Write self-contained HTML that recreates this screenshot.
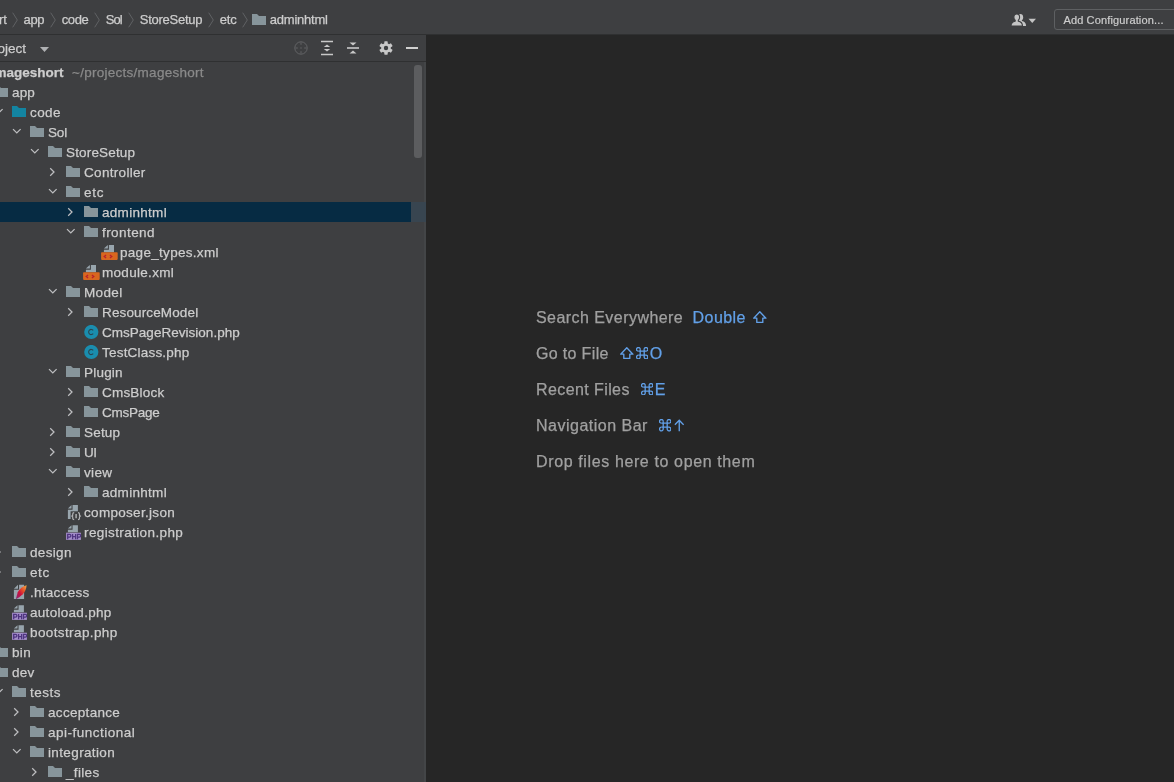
<!DOCTYPE html>
<html><head><meta charset="utf-8"><style>
html,body{margin:0;padding:0}
body{width:1174px;height:782px;overflow:hidden;position:relative;background:#3E3F41;font-family:"Liberation Sans",sans-serif;color:#CDCDCD}
.ab,.t,.ic,.ch{position:absolute}
.t{font-size:13.5px;line-height:20px;white-space:nowrap;top:1px;-webkit-text-stroke:0.25px currentColor}
#top{will-change:transform;position:absolute;left:0;top:0;width:1174px;height:34px;background:#3E3F41;border-bottom:1px solid #2F3031}
#panel{will-change:transform;position:absolute;left:0;top:35px;width:426px;height:747px;background:#3E3F41;overflow:hidden}
#hdr{position:absolute;left:0;top:0;width:426px;height:26px;border-bottom:1px solid #2F3031}
#tree{position:absolute;left:0;top:-35px;width:426px;height:782px}
.r{position:absolute;left:0;width:411px;height:20px}
.r.sel{background:#062B43}
.b{font-weight:bold}
.dim{color:#8A8A8A}
#editor{will-change:transform;position:absolute;left:426px;top:35px;width:748px;height:747px;background:#262626}
.et{position:absolute;font-size:16px;line-height:20px;white-space:nowrap;color:#A0A0A0;-webkit-text-stroke:0.25px currentColor}
.bl{color:#62A0E8}
#thumb{position:absolute;left:414px;top:30px;width:8px;height:93px;border-radius:3px;background:#5C5D5F}
#btn{position:absolute;left:1054px;top:9px;width:130px;height:21px;border:1px solid #5E6062;border-radius:3px;box-sizing:border-box}
</style></head><body>
<div id="top">
<span class="t" style="left:-54.5px;top:10px;font-size:13px">mageshort</span><span class="t" style="left:23.5px;top:10px;font-size:13px;letter-spacing:-0.302px">app</span><span class="t" style="left:61.8px;top:10px;font-size:13px;letter-spacing:-0.434px">code</span><span class="t" style="left:105.7px;top:10px;font-size:13px;letter-spacing:-0.898px">Sol</span><span class="t" style="left:139.8px;top:10px;font-size:13px;letter-spacing:-0.262px">StoreSetup</span><span class="t" style="left:219.7px;top:10px;font-size:13px;letter-spacing:-0.172px">etc</span><span class="t" style="left:269.8px;top:10px;font-size:13px;letter-spacing:-0.236px">adminhtml</span><svg class="ab" width="7" height="16" viewBox="0 0 7 16" style="left:11.8px;top:12px"><path d="M0.7 0.7L5.3 8L0.7 15.3" stroke="#606264" stroke-width="1" fill="none"/></svg><svg class="ab" width="7" height="16" viewBox="0 0 7 16" style="left:49.5px;top:12px"><path d="M0.7 0.7L5.3 8L0.7 15.3" stroke="#606264" stroke-width="1" fill="none"/></svg><svg class="ab" width="7" height="16" viewBox="0 0 7 16" style="left:93.5px;top:12px"><path d="M0.7 0.7L5.3 8L0.7 15.3" stroke="#606264" stroke-width="1" fill="none"/></svg><svg class="ab" width="7" height="16" viewBox="0 0 7 16" style="left:127.5px;top:12px"><path d="M0.7 0.7L5.3 8L0.7 15.3" stroke="#606264" stroke-width="1" fill="none"/></svg><svg class="ab" width="7" height="16" viewBox="0 0 7 16" style="left:207.8px;top:12px"><path d="M0.7 0.7L5.3 8L0.7 15.3" stroke="#606264" stroke-width="1" fill="none"/></svg><svg class="ab" width="7" height="16" viewBox="0 0 7 16" style="left:241.8px;top:12px"><path d="M0.7 0.7L5.3 8L0.7 15.3" stroke="#606264" stroke-width="1" fill="none"/></svg><svg class="ab" width="14" height="11" viewBox="0 0 14 11" style="left:252px;top:14px"><path d="M0 0H5L7 2H14V11H0Z" fill="#87959B"/></svg>
<svg class="ab" width="27" height="14" viewBox="0 0 27 14" style="left:1010px;top:13px"><path transform="translate(3.6 0)" d="M1 13C1 10.2 2.8 8.6 5.2 8.1L5.2 7.3C4.3 6.6 3.9 5.5 3.9 4.2C3.9 2 5.1 0.9 6.75 0.9C8.4 0.9 9.6 2 9.6 4.2C9.6 5.5 9.2 6.6 8.3 7.3L8.3 8.1C10.7 8.6 12.5 10.2 12.5 13Z" fill="#C4C4C4"/><path d="M1 13C1 10.2 2.8 8.6 5.2 8.1L5.2 7.3C4.3 6.6 3.9 5.5 3.9 4.2C3.9 2 5.1 0.9 6.75 0.9C8.4 0.9 9.6 2 9.6 4.2C9.6 5.5 9.2 6.6 8.3 7.3L8.3 8.1C10.7 8.6 12.5 10.2 12.5 13Z" fill="#C4C4C4" stroke="#3E3F41" stroke-width="1.1"/><path d="M18.5 5.8H26L22.25 9.9Z" fill="#C4C4C4"/></svg>
<div id="btn"></div>
<span class="t" style="left:1063.4px;top:10px;font-size:11px;letter-spacing:0.15px;-webkit-text-stroke:0.2px currentColor">Add Configuration...</span>
</div>
<div id="panel">
<div id="hdr">
<span class="t" style="left:-16px;top:4px">Project</span>
<svg class="ab" width="9" height="6" viewBox="0 0 9 6" style="left:39.5px;top:11.5px"><path d="M0 0H9L4.5 5Z" fill="#AFB1B3"/></svg>
<svg class="ab" width="16" height="16" viewBox="0 0 16 16" style="left:293px;top:5px"><circle cx="8" cy="8" r="6.2" stroke="#66686A" stroke-width="0.9" fill="none"/><path d="M8 2.5V4.8M8 11.2V13.5M2.5 8H4.8M11.2 8H13.5" stroke="#66686A" stroke-width="0.9"/><circle cx="8" cy="8" r="0.7" fill="#66686A"/></svg>
<svg class="ab" width="14" height="16" viewBox="0 0 14 16" style="left:320px;top:5px"><path d="M1 1.5H13M1 14.5H13" stroke="#C8C8C8" stroke-width="1.6"/><path d="M3.8 7.1L7 4.4L10.2 7.1ZM3.8 8.9L7 11.6L10.2 8.9Z" fill="#C8C8C8"/></svg>
<svg class="ab" width="14" height="16" viewBox="0 0 14 16" style="left:346px;top:5px"><path d="M1 8H13" stroke="#C8C8C8" stroke-width="1.6"/><path d="M3.5 2.5L7 5.5L10.5 2.5ZM3.5 13.5L7 10.5L10.5 13.5Z" fill="#C8C8C8"/></svg>
<svg class="ab" width="14" height="14" viewBox="0 0 14 14" style="left:379px;top:6px"><g fill="#C8C8C8"><circle cx="7" cy="7" r="4.8"/><rect x="5.3" y="0.3" width="3.4" height="13.4" rx="0.6"/><rect x="5.3" y="0.3" width="3.4" height="13.4" rx="0.6" transform="rotate(60 7 7)"/><rect x="5.3" y="0.3" width="3.4" height="13.4" rx="0.6" transform="rotate(120 7 7)"/></g><circle cx="7" cy="7" r="2.2" fill="#3C3F41"/></svg>
<div class="ab" style="left:406px;top:12px;width:12px;height:2px;background:#D0D0D0"></div>
</div>
<div id="tree">
<div class="r" style="top:62px"><span class="t b" style="left:-5.6px">mageshort</span><span class="t dim" style="left:72px;letter-spacing:0.268px">~/projects/mageshort</span></div><div class="r" style="top:82px"><svg class="ch" width="7" height="10" viewBox="0 0 7 10" style="left:-23.5px;top:5px"><path d="M1.2 1.2L5 5L1.2 8.8" stroke="#BDBEC0" stroke-width="1.25" fill="none"/></svg><svg class="ic" width="14" height="11" viewBox="0 0 14 11" style="left:-6px;top:4px"><path d="M0 0H5L7 2H14V11H0Z" fill="#87959B"/></svg><span class="t" style="left:12px;letter-spacing:0.177px">app</span></div><div class="r" style="top:102px"><svg class="ch" width="10" height="7" viewBox="0 0 10 7" style="left:-6.399999999999999px;top:6px"><path d="M1 1.1L4.8 4.9L8.6 1.1" stroke="#BDBEC0" stroke-width="1.25" fill="none"/></svg><svg class="ic" width="14" height="11" viewBox="0 0 14 11" style="left:12px;top:4px"><path d="M0 0H5L7 2H14V11H0Z" fill="#1384A1"/></svg><span class="t" style="left:30px;letter-spacing:0.401px">code</span></div><div class="r" style="top:122px"><svg class="ch" width="10" height="7" viewBox="0 0 10 7" style="left:11.600000000000001px;top:6px"><path d="M1 1.1L4.8 4.9L8.6 1.1" stroke="#BDBEC0" stroke-width="1.25" fill="none"/></svg><svg class="ic" width="14" height="11" viewBox="0 0 14 11" style="left:30px;top:4px"><path d="M0 0H5L7 2H14V11H0Z" fill="#87959B"/></svg><span class="t" style="left:48px;letter-spacing:-0.158px">Sol</span></div><div class="r" style="top:142px"><svg class="ch" width="10" height="7" viewBox="0 0 10 7" style="left:29.6px;top:6px"><path d="M1 1.1L4.8 4.9L8.6 1.1" stroke="#BDBEC0" stroke-width="1.25" fill="none"/></svg><svg class="ic" width="14" height="11" viewBox="0 0 14 11" style="left:48px;top:4px"><path d="M0 0H5L7 2H14V11H0Z" fill="#87959B"/></svg><span class="t" style="left:66px;letter-spacing:0.158px">StoreSetup</span></div><div class="r" style="top:162px"><svg class="ch" width="7" height="10" viewBox="0 0 7 10" style="left:48.5px;top:5px"><path d="M1.2 1.2L5 5L1.2 8.8" stroke="#BDBEC0" stroke-width="1.25" fill="none"/></svg><svg class="ic" width="14" height="11" viewBox="0 0 14 11" style="left:66px;top:4px"><path d="M0 0H5L7 2H14V11H0Z" fill="#87959B"/></svg><span class="t" style="left:84px;letter-spacing:0.315px">Controller</span></div><div class="r" style="top:182px"><svg class="ch" width="10" height="7" viewBox="0 0 10 7" style="left:47.6px;top:6px"><path d="M1 1.1L4.8 4.9L8.6 1.1" stroke="#BDBEC0" stroke-width="1.25" fill="none"/></svg><svg class="ic" width="14" height="11" viewBox="0 0 14 11" style="left:66px;top:4px"><path d="M0 0H5L7 2H14V11H0Z" fill="#87959B"/></svg><span class="t" style="left:84px;letter-spacing:0.742px">etc</span></div><div class="r sel" style="top:202px"><svg class="ch" width="7" height="10" viewBox="0 0 7 10" style="left:66.5px;top:5px"><path d="M1.2 1.2L5 5L1.2 8.8" stroke="#BDBEC0" stroke-width="1.25" fill="none"/></svg><svg class="ic" width="14" height="11" viewBox="0 0 14 11" style="left:84px;top:4px"><path d="M0 0H5L7 2H14V11H0Z" fill="#87959B"/></svg><span class="t" style="left:102px;letter-spacing:0.298px">adminhtml</span></div><div class="r" style="top:222px"><svg class="ch" width="10" height="7" viewBox="0 0 10 7" style="left:65.6px;top:6px"><path d="M1 1.1L4.8 4.9L8.6 1.1" stroke="#BDBEC0" stroke-width="1.25" fill="none"/></svg><svg class="ic" width="14" height="11" viewBox="0 0 14 11" style="left:84px;top:4px"><path d="M0 0H5L7 2H14V11H0Z" fill="#87959B"/></svg><span class="t" style="left:102px;letter-spacing:0.432px">frontend</span></div><div class="r" style="top:242px"><svg class="ic" width="17" height="16" viewBox="0 0 17 16" style="left:101px;top:2px"><path d="M2.9 4.6L6.85 0.9V4.6Z" fill="#98A5AD"/><path d="M7.8999999999999995 0.9H13V8.2H2.9V5.6499999999999995H7.8999999999999995Z" fill="#98A5AD"/><path d="M0.8 8.2H15.9Q16.7 8.2 16.7 9V15.1Q16.7 15.9 15.9 15.9H0.8Q0.1 15.9 0.1 15.1V9Q0.1 8.2 0.8 8.2Z" fill="#D9661F"/><path d="M5.1 10.9L3.2 12.4L5.1 13.9M8.9 10.9L10.8 12.4L8.9 13.9" stroke="#B8202C" stroke-width="1.25" fill="none"/></svg><span class="t" style="left:120px;letter-spacing:0.299px">page_types.xml</span></div><div class="r" style="top:262px"><svg class="ic" width="17" height="16" viewBox="0 0 17 16" style="left:83px;top:2px"><path d="M2.9 4.6L6.85 0.9V4.6Z" fill="#98A5AD"/><path d="M7.8999999999999995 0.9H13V8.2H2.9V5.6499999999999995H7.8999999999999995Z" fill="#98A5AD"/><path d="M0.8 8.2H15.9Q16.7 8.2 16.7 9V15.1Q16.7 15.9 15.9 15.9H0.8Q0.1 15.9 0.1 15.1V9Q0.1 8.2 0.8 8.2Z" fill="#D9661F"/><path d="M5.1 10.9L3.2 12.4L5.1 13.9M8.9 10.9L10.8 12.4L8.9 13.9" stroke="#B8202C" stroke-width="1.25" fill="none"/></svg><span class="t" style="left:102px;letter-spacing:0.304px">module.xml</span></div><div class="r" style="top:282px"><svg class="ch" width="10" height="7" viewBox="0 0 10 7" style="left:47.6px;top:6px"><path d="M1 1.1L4.8 4.9L8.6 1.1" stroke="#BDBEC0" stroke-width="1.25" fill="none"/></svg><svg class="ic" width="14" height="11" viewBox="0 0 14 11" style="left:66px;top:4px"><path d="M0 0H5L7 2H14V11H0Z" fill="#87959B"/></svg><span class="t" style="left:84px;letter-spacing:0.351px">Model</span></div><div class="r" style="top:302px"><svg class="ch" width="7" height="10" viewBox="0 0 7 10" style="left:66.5px;top:5px"><path d="M1.2 1.2L5 5L1.2 8.8" stroke="#BDBEC0" stroke-width="1.25" fill="none"/></svg><svg class="ic" width="14" height="11" viewBox="0 0 14 11" style="left:84px;top:4px"><path d="M0 0H5L7 2H14V11H0Z" fill="#87959B"/></svg><span class="t" style="left:102px;letter-spacing:0.133px">ResourceModel</span></div><div class="r" style="top:322px"><svg class="ic" width="16" height="16" viewBox="0 0 16 16" style="left:83.5px;top:3px"><circle cx="7.3" cy="7" r="7.1" fill="#1A8DAE"/><path d="M9.2 5.3A2.6 2.6 0 1 0 9.2 8.7" stroke="#2A4550" stroke-width="1.05" fill="none"/></svg><span class="t" style="left:102px;letter-spacing:0.023px">CmsPageRevision.php</span></div><div class="r" style="top:342px"><svg class="ic" width="16" height="16" viewBox="0 0 16 16" style="left:83.5px;top:3px"><circle cx="7.3" cy="7" r="7.1" fill="#1A8DAE"/><path d="M9.2 5.3A2.6 2.6 0 1 0 9.2 8.7" stroke="#2A4550" stroke-width="1.05" fill="none"/></svg><span class="t" style="left:102px;letter-spacing:0.206px">TestClass.php</span></div><div class="r" style="top:362px"><svg class="ch" width="10" height="7" viewBox="0 0 10 7" style="left:47.6px;top:6px"><path d="M1 1.1L4.8 4.9L8.6 1.1" stroke="#BDBEC0" stroke-width="1.25" fill="none"/></svg><svg class="ic" width="14" height="11" viewBox="0 0 14 11" style="left:66px;top:4px"><path d="M0 0H5L7 2H14V11H0Z" fill="#87959B"/></svg><span class="t" style="left:84px;letter-spacing:0.211px">Plugin</span></div><div class="r" style="top:382px"><svg class="ch" width="7" height="10" viewBox="0 0 7 10" style="left:66.5px;top:5px"><path d="M1.2 1.2L5 5L1.2 8.8" stroke="#BDBEC0" stroke-width="1.25" fill="none"/></svg><svg class="ic" width="14" height="11" viewBox="0 0 14 11" style="left:84px;top:4px"><path d="M0 0H5L7 2H14V11H0Z" fill="#87959B"/></svg><span class="t" style="left:102px;letter-spacing:0.205px">CmsBlock</span></div><div class="r" style="top:402px"><svg class="ch" width="7" height="10" viewBox="0 0 7 10" style="left:66.5px;top:5px"><path d="M1.2 1.2L5 5L1.2 8.8" stroke="#BDBEC0" stroke-width="1.25" fill="none"/></svg><svg class="ic" width="14" height="11" viewBox="0 0 14 11" style="left:84px;top:4px"><path d="M0 0H5L7 2H14V11H0Z" fill="#87959B"/></svg><span class="t" style="left:102px;letter-spacing:-0.233px">CmsPage</span></div><div class="r" style="top:422px"><svg class="ch" width="7" height="10" viewBox="0 0 7 10" style="left:48.5px;top:5px"><path d="M1.2 1.2L5 5L1.2 8.8" stroke="#BDBEC0" stroke-width="1.25" fill="none"/></svg><svg class="ic" width="14" height="11" viewBox="0 0 14 11" style="left:66px;top:4px"><path d="M0 0H5L7 2H14V11H0Z" fill="#87959B"/></svg><span class="t" style="left:84px;letter-spacing:0.201px">Setup</span></div><div class="r" style="top:442px"><svg class="ch" width="7" height="10" viewBox="0 0 7 10" style="left:48.5px;top:5px"><path d="M1.2 1.2L5 5L1.2 8.8" stroke="#BDBEC0" stroke-width="1.25" fill="none"/></svg><svg class="ic" width="14" height="11" viewBox="0 0 14 11" style="left:66px;top:4px"><path d="M0 0H5L7 2H14V11H0Z" fill="#87959B"/></svg><span class="t" style="left:84px;letter-spacing:-0.400px">UI</span></div><div class="r" style="top:462px"><svg class="ch" width="10" height="7" viewBox="0 0 10 7" style="left:47.6px;top:6px"><path d="M1 1.1L4.8 4.9L8.6 1.1" stroke="#BDBEC0" stroke-width="1.25" fill="none"/></svg><svg class="ic" width="14" height="11" viewBox="0 0 14 11" style="left:66px;top:4px"><path d="M0 0H5L7 2H14V11H0Z" fill="#87959B"/></svg><span class="t" style="left:84px;letter-spacing:0.328px">view</span></div><div class="r" style="top:482px"><svg class="ch" width="7" height="10" viewBox="0 0 7 10" style="left:66.5px;top:5px"><path d="M1.2 1.2L5 5L1.2 8.8" stroke="#BDBEC0" stroke-width="1.25" fill="none"/></svg><svg class="ic" width="14" height="11" viewBox="0 0 14 11" style="left:84px;top:4px"><path d="M0 0H5L7 2H14V11H0Z" fill="#87959B"/></svg><span class="t" style="left:102px;letter-spacing:0.298px">adminhtml</span></div><div class="r" style="top:502px"><svg class="ic" width="16" height="16" viewBox="0 0 16 16" style="left:66px;top:3px"><path d="M1.9 3.6L5.5 0.1V3.6Z" fill="#98A5AD"/><path d="M6.55 0.1H11.9V14H1.9V4.65H6.55Z" fill="#98A5AD"/><path d="M4.6 6.3H15.8V15.6H4.6Z" fill="#3E3F41"/><path d="M8.2 7.6Q6.7 7.6 6.7 9V10.4L5.8 11.1L6.7 11.8V13.2Q6.7 14.6 8.2 14.6M12 7.6Q13.5 7.6 13.5 9V10.4L14.4 11.1L13.5 11.8V13.2Q13.5 14.6 12 14.6" stroke="#B4B6B8" stroke-width="1.15" fill="none"/><path d="M10.1 9V13.2" stroke="#B4B6B8" stroke-width="1.4"/></svg><span class="t" style="left:84px;letter-spacing:0.309px">composer.json</span></div><div class="r" style="top:522px"><svg class="ic" width="16" height="16" viewBox="0 0 16 16" style="left:66px;top:3px"><path d="M1.9 3.6L5.5 0.3V3.6Z" fill="#98A5AD"/><path d="M6.55 0.3H11.9V7.2H1.9V4.65H6.55Z" fill="#98A5AD"/><path d="M0.1 7.7H14.9V14.9H0.1Z" fill="#A48ECA"/><path d="M1.7 14.3V9.3H3.5Q4.9 9.3 4.9 10.75Q4.9 12.2 3.5 12.2H1.7M6.6 9.1V14.3M9.6 9.1V14.3M6.6 11.7H9.6M11.5 14.3V9.3H13.3Q14.7 9.3 14.7 10.75Q14.7 12.2 13.3 12.2H11.5" stroke="#4F3580" stroke-width="1.3" fill="none"/></svg><span class="t" style="left:84px;letter-spacing:0.385px">registration.php</span></div><div class="r" style="top:542px"><svg class="ch" width="7" height="10" viewBox="0 0 7 10" style="left:-5.5px;top:5px"><path d="M1.2 1.2L5 5L1.2 8.8" stroke="#BDBEC0" stroke-width="1.25" fill="none"/></svg><svg class="ic" width="14" height="11" viewBox="0 0 14 11" style="left:12px;top:4px"><path d="M0 0H5L7 2H14V11H0Z" fill="#87959B"/></svg><span class="t" style="left:30px;letter-spacing:0.338px">design</span></div><div class="r" style="top:562px"><svg class="ch" width="7" height="10" viewBox="0 0 7 10" style="left:-5.5px;top:5px"><path d="M1.2 1.2L5 5L1.2 8.8" stroke="#BDBEC0" stroke-width="1.25" fill="none"/></svg><svg class="ic" width="14" height="11" viewBox="0 0 14 11" style="left:12px;top:4px"><path d="M0 0H5L7 2H14V11H0Z" fill="#87959B"/></svg><span class="t" style="left:30px;letter-spacing:0.592px">etc</span></div><div class="r" style="top:582px"><svg class="ic" width="16" height="16" viewBox="0 0 16 16" style="left:12px;top:2px"><path d="M1.9 4.8L6 0.8V4.8Z" fill="#98A5AD"/><path d="M7.05 0.8H12.1V15H1.9V5.85H7.05Z" fill="#98A5AD"/><defs><linearGradient id="fg" x1="1" y1="0" x2="0" y2="1"><stop offset="0" stop-color="#F5B041"/><stop offset="0.35" stop-color="#E5502A"/><stop offset="0.6" stop-color="#D0103C"/><stop offset="1" stop-color="#7A2A78"/></linearGradient></defs><path d="M14.6 1.2Q8.6 2.6 5.6 8.6L3.9 15.2Q8.2 12.8 10.8 10.2Q14.2 6.6 14.6 1.2Z" fill="url(#fg)"/></svg><span class="t" style="left:30px;letter-spacing:0.269px">.htaccess</span></div><div class="r" style="top:602px"><svg class="ic" width="16" height="16" viewBox="0 0 16 16" style="left:12px;top:3px"><path d="M1.9 3.6L5.5 0.3V3.6Z" fill="#98A5AD"/><path d="M6.55 0.3H11.9V7.2H1.9V4.65H6.55Z" fill="#98A5AD"/><path d="M0.1 7.7H14.9V14.9H0.1Z" fill="#A48ECA"/><path d="M1.7 14.3V9.3H3.5Q4.9 9.3 4.9 10.75Q4.9 12.2 3.5 12.2H1.7M6.6 9.1V14.3M9.6 9.1V14.3M6.6 11.7H9.6M11.5 14.3V9.3H13.3Q14.7 9.3 14.7 10.75Q14.7 12.2 13.3 12.2H11.5" stroke="#4F3580" stroke-width="1.3" fill="none"/></svg><span class="t" style="left:30px;letter-spacing:0.296px">autoload.php</span></div><div class="r" style="top:622px"><svg class="ic" width="16" height="16" viewBox="0 0 16 16" style="left:12px;top:3px"><path d="M1.9 3.6L5.5 0.3V3.6Z" fill="#98A5AD"/><path d="M6.55 0.3H11.9V7.2H1.9V4.65H6.55Z" fill="#98A5AD"/><path d="M0.1 7.7H14.9V14.9H0.1Z" fill="#A48ECA"/><path d="M1.7 14.3V9.3H3.5Q4.9 9.3 4.9 10.75Q4.9 12.2 3.5 12.2H1.7M6.6 9.1V14.3M9.6 9.1V14.3M6.6 11.7H9.6M11.5 14.3V9.3H13.3Q14.7 9.3 14.7 10.75Q14.7 12.2 13.3 12.2H11.5" stroke="#4F3580" stroke-width="1.3" fill="none"/></svg><span class="t" style="left:30px;letter-spacing:0.390px">bootstrap.php</span></div><div class="r" style="top:642px"><svg class="ch" width="7" height="10" viewBox="0 0 7 10" style="left:-23.5px;top:5px"><path d="M1.2 1.2L5 5L1.2 8.8" stroke="#BDBEC0" stroke-width="1.25" fill="none"/></svg><svg class="ic" width="14" height="11" viewBox="0 0 14 11" style="left:-6px;top:4px"><path d="M0 0H5L7 2H14V11H0Z" fill="#87959B"/></svg><span class="t" style="left:12px;letter-spacing:0.334px">bin</span></div><div class="r" style="top:662px"><svg class="ch" width="7" height="10" viewBox="0 0 7 10" style="left:-23.5px;top:5px"><path d="M1.2 1.2L5 5L1.2 8.8" stroke="#BDBEC0" stroke-width="1.25" fill="none"/></svg><svg class="ic" width="14" height="11" viewBox="0 0 14 11" style="left:-6px;top:4px"><path d="M0 0H5L7 2H14V11H0Z" fill="#87959B"/></svg><span class="t" style="left:12px;letter-spacing:0.259px">dev</span></div><div class="r" style="top:682px"><svg class="ch" width="10" height="7" viewBox="0 0 10 7" style="left:-6.399999999999999px;top:6px"><path d="M1 1.1L4.8 4.9L8.6 1.1" stroke="#BDBEC0" stroke-width="1.25" fill="none"/></svg><svg class="ic" width="14" height="11" viewBox="0 0 14 11" style="left:12px;top:4px"><path d="M0 0H5L7 2H14V11H0Z" fill="#87959B"/></svg><span class="t" style="left:30px;letter-spacing:0.496px">tests</span></div><div class="r" style="top:702px"><svg class="ch" width="7" height="10" viewBox="0 0 7 10" style="left:12.5px;top:5px"><path d="M1.2 1.2L5 5L1.2 8.8" stroke="#BDBEC0" stroke-width="1.25" fill="none"/></svg><svg class="ic" width="14" height="11" viewBox="0 0 14 11" style="left:30px;top:4px"><path d="M0 0H5L7 2H14V11H0Z" fill="#87959B"/></svg><span class="t" style="left:48px;letter-spacing:0.312px">acceptance</span></div><div class="r" style="top:722px"><svg class="ch" width="7" height="10" viewBox="0 0 7 10" style="left:12.5px;top:5px"><path d="M1.2 1.2L5 5L1.2 8.8" stroke="#BDBEC0" stroke-width="1.25" fill="none"/></svg><svg class="ic" width="14" height="11" viewBox="0 0 14 11" style="left:30px;top:4px"><path d="M0 0H5L7 2H14V11H0Z" fill="#87959B"/></svg><span class="t" style="left:48px;letter-spacing:0.495px">api-functional</span></div><div class="r" style="top:742px"><svg class="ch" width="10" height="7" viewBox="0 0 10 7" style="left:11.600000000000001px;top:6px"><path d="M1 1.1L4.8 4.9L8.6 1.1" stroke="#BDBEC0" stroke-width="1.25" fill="none"/></svg><svg class="ic" width="14" height="11" viewBox="0 0 14 11" style="left:30px;top:4px"><path d="M0 0H5L7 2H14V11H0Z" fill="#87959B"/></svg><span class="t" style="left:48px;letter-spacing:0.371px">integration</span></div><div class="r" style="top:762px"><svg class="ch" width="7" height="10" viewBox="0 0 7 10" style="left:30.5px;top:5px"><path d="M1.2 1.2L5 5L1.2 8.8" stroke="#BDBEC0" stroke-width="1.25" fill="none"/></svg><svg class="ic" width="14" height="11" viewBox="0 0 14 11" style="left:48px;top:4px"><path d="M0 0H5L7 2H14V11H0Z" fill="#87959B"/></svg><span class="t" style="left:66px;letter-spacing:0.334px">_files</span></div>
</div>
<div id="thumb"></div><div class="ab" style="left:424px;top:27px;width:2px;height:720px;background:#434547"></div><div class="ab" style="left:411px;top:167px;width:15px;height:20px;background:#384550"></div>
</div>
<div id="editor">
<div style="position:absolute;left:-426px;top:-35px;width:1174px;height:782px">
<span class="et" style="left:536px;top:308px;letter-spacing:0.445px">Search Everywhere</span><span class="et bl" style="left:692.6px;top:308px;letter-spacing:0.430px">Double</span><span class="et" style="left:536px;top:344px;letter-spacing:0.340px">Go to File</span><span class="et" style="left:536px;top:380px;letter-spacing:0.409px">Recent Files</span><span class="et" style="left:536px;top:416px;letter-spacing:0.498px">Navigation Bar</span><span class="et" style="left:536px;top:452px;letter-spacing:0.623px">Drop files here to open them</span>
<svg class="ab" width="13.6" height="12.2" viewBox="0 0 13.6 12.2" preserveAspectRatio="none" style="left:753.3px;top:311.3px"><path d="M6.8 0.8L12.9 7.2H9.8V11.5H3.8V7.2H0.7Z" stroke="#62A0E8" stroke-width="1.35" fill="none" stroke-linejoin="round"/></svg><svg class="ab" width="13.6" height="12.2" viewBox="0 0 13.6 12.2" preserveAspectRatio="none" style="left:620.1px;top:347px"><path d="M6.8 0.8L12.9 7.2H9.8V11.5H3.8V7.2H0.7Z" stroke="#62A0E8" stroke-width="1.35" fill="none" stroke-linejoin="round"/></svg><svg class="ab" width="12.4" height="12.4" viewBox="0 0 12.4 12.4" style="left:636px;top:347px"><g stroke="#62A0E8" stroke-width="1.3" fill="none"><path d="M4.2 2.4V10M8.2 2.4V10M2.4 4.2H10M2.4 8.2H10"/><path d="M4.2 2.6A1.85 1.85 0 1 0 2.4 4.2M8.2 2.6A1.85 1.85 0 1 1 10 4.2M4.2 9.8A1.85 1.85 0 1 1 2.4 8.2M8.2 9.8A1.85 1.85 0 1 0 10 8.2"/></g></svg><span class="et bl" style="left:649.8px;top:344px">O</span><svg class="ab" width="12.4" height="12.4" viewBox="0 0 12.4 12.4" style="left:641.1px;top:382.8px"><g stroke="#62A0E8" stroke-width="1.3" fill="none"><path d="M4.2 2.4V10M8.2 2.4V10M2.4 4.2H10M2.4 8.2H10"/><path d="M4.2 2.6A1.85 1.85 0 1 0 2.4 4.2M8.2 2.6A1.85 1.85 0 1 1 10 4.2M4.2 9.8A1.85 1.85 0 1 1 2.4 8.2M8.2 9.8A1.85 1.85 0 1 0 10 8.2"/></g></svg><span class="et bl" style="left:654.8px;top:380px">E</span><svg class="ab" width="12.4" height="12.4" viewBox="0 0 12.4 12.4" style="left:659.1px;top:419.2px"><g stroke="#62A0E8" stroke-width="1.3" fill="none"><path d="M4.2 2.4V10M8.2 2.4V10M2.4 4.2H10M2.4 8.2H10"/><path d="M4.2 2.6A1.85 1.85 0 1 0 2.4 4.2M8.2 2.6A1.85 1.85 0 1 1 10 4.2M4.2 9.8A1.85 1.85 0 1 1 2.4 8.2M8.2 9.8A1.85 1.85 0 1 0 10 8.2"/></g></svg><svg class="ab" width="10.5" height="12.6" viewBox="0 0 10.5 12.6" style="left:673.8px;top:419.2px"><g stroke="#62A0E8" stroke-width="1.35" fill="none"><path d="M5.25 12.3V1.4M0.9 5.8L5.25 1.2L9.6 5.8"/></g></svg>
</div>
</div>
</body></html>
